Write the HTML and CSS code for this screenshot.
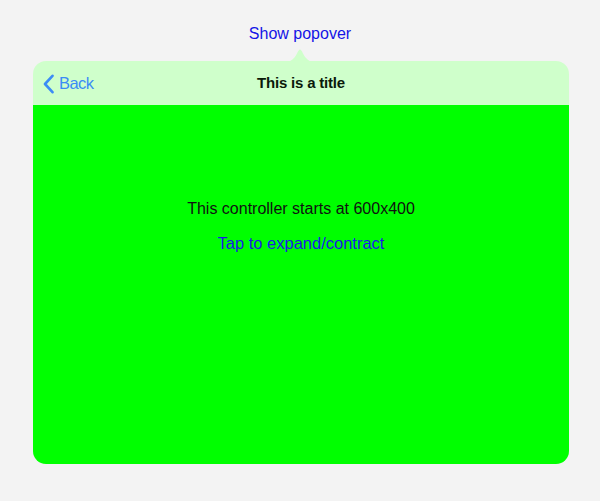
FILE: index.html
```html
<!DOCTYPE html>
<html>
<head>
<meta charset="utf-8">
<link rel="stylesheet" href="styles.css">
</head>
<body>
<div class="screen">
  <div class="trigger">Show popover</div>
  <div class="popover">
    <svg class="arrow" width="30" height="13" viewBox="0 0 30 13"><path d="M0 13 C6 13 9 10 12 4.5 C13.5 1.5 14 0.5 15 0.5 C16 0.5 16.5 1.5 18 4.5 C21 10 24 13 30 13 Z" fill="#cfffcb"/></svg>
    <div class="navbar">
      <div class="back">
        <svg class="chev" width="12" height="20" viewBox="0 0 12 20"><path d="M9.5 1.8 L2 10 L9.5 18.2" fill="none" stroke="#3b8cf6" stroke-width="2.6" stroke-linecap="round" stroke-linejoin="round"/></svg>
        <span>Back</span>
      </div>
      <div class="title">This is a title</div>
    </div>
    <div class="content">
      <div class="info">This controller starts at 600x400</div>
      <div class="link">Tap to expand/contract</div>
    </div>
  </div>
</div>
</body>
</html>
```
FILE: styles.css
```css
html, body {
  margin: 0;
  padding: 0;
}
body {
  background: #f3f3f3;
  font-family: "Liberation Sans", Arial, sans-serif;
  width: 600px;
  height: 501px;
  overflow: hidden;
}
.screen {
  display: flex;
  flex-direction: column;
  align-items: flex-start;
}
.trigger {
  align-self: center;
  margin-top: 23px;
  height: 22px;
  line-height: 22px;
  font-size: 16px;
  color: #1414e6;
}
.popover {
  position: relative;
  margin-top: 16px;
  margin-left: 33px;
  width: 536px;
  height: 403px;
  border-radius: 13px;
  display: flex;
  flex-direction: column;
}
.arrow {
  position: absolute;
  top: -12px;
  left: 252px;
}
.navbar {
  position: relative;
  height: 44px;
  background: #cfffcb;
  border-radius: 13px 13px 0 0;
  display: flex;
  align-items: center;
  justify-content: center;
}
.back {
  position: absolute;
  left: 10px;
  top: 11px;
  height: 22px;
  display: flex;
  align-items: center;
  gap: 4px;
  color: #3b8cf6;
  font-size: 16.5px;
  letter-spacing: -0.6px;
  line-height: 22px;
}
.chev {
  display: block;
  margin-top: 1px;
}
.title {
  font-size: 15px;
  line-height: 22px;
  font-weight: bold;
  letter-spacing: -0.2px;
  color: #0a1a0a;
}
.content {
  flex: 1;
  background: #00ff00;
  border-radius: 0 0 13px 13px;
  display: flex;
  flex-direction: column;
  align-items: center;
  padding-top: 93px;
}
.info {
  font-size: 16px;
  color: #111;
  line-height: 22px;
}
.link {
  margin-top: 12px;
  font-size: 16.5px;
  line-height: 22px;
  color: #1a1ae6;
}
```
